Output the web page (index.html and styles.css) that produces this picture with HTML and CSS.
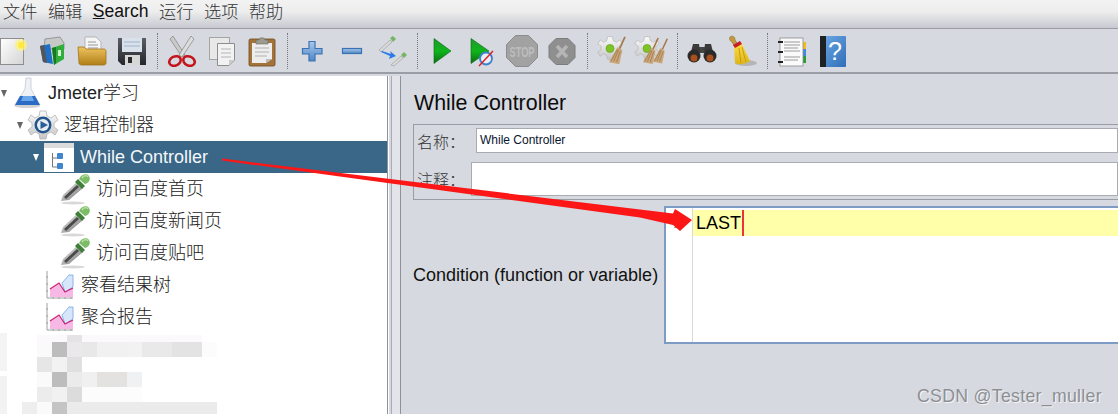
FILE: index.html
```html
<!DOCTYPE html>
<html lang="en">
<head>
  <meta charset="UTF-8">
  <title>While Controller</title>
  <link rel="stylesheet" href="styles.css">
</head>
<body>
  <!-- Shared gradients and repeated icons -->
  <svg class="defs" width="0" height="0" aria-hidden="true">
    <defs>
      <linearGradient id="gPage" x1="0" y1="0" x2="1" y2="1"><stop offset="0" stop-color="#fff"/><stop offset="1" stop-color="#d4d4d4"/></linearGradient>
      <linearGradient id="gFolder" x1="0" y1="0" x2="0" y2="1"><stop offset="0" stop-color="#eec35f"/><stop offset="1" stop-color="#b27f17"/></linearGradient>
      <linearGradient id="gDisk" x1="0" y1="0" x2="0" y2="1"><stop offset="0" stop-color="#5a5f66"/><stop offset="1" stop-color="#24272b"/></linearGradient>
      <linearGradient id="gPlay" x1="0" y1="0" x2="0" y2="1"><stop offset="0" stop-color="#1f9a2a"/><stop offset="0.5" stop-color="#0fb51c"/><stop offset="1" stop-color="#0a6d14"/></linearGradient>
      <linearGradient id="gBlue" x1="0" y1="0" x2="0" y2="1"><stop offset="0" stop-color="#a9c8ec"/><stop offset="1" stop-color="#4f87c6"/></linearGradient>
      <linearGradient id="gGear" x1="0" y1="0" x2="0" y2="1"><stop offset="0" stop-color="#fafafa"/><stop offset="1" stop-color="#c6c6c6"/></linearGradient>
      <linearGradient id="gBroom" x1="0" y1="0" x2="0" y2="1"><stop offset="0" stop-color="#ffe04a"/><stop offset="1" stop-color="#dcb417"/></linearGradient>
      <linearGradient id="gBook" x1="0" y1="0" x2="1" y2="1"><stop offset="0" stop-color="#6fa9e6"/><stop offset="1" stop-color="#2f6fb8"/></linearGradient>
      <linearGradient id="gGlass" x1="0" y1="0" x2="1" y2="1"><stop offset="0" stop-color="#f2f2f2"/><stop offset="1" stop-color="#6c6c6c"/></linearGradient>

      <symbol id="dropper" viewBox="0 0 32 32">
        <ellipse cx="13" cy="30" rx="12" ry="1.400" fill="#c8c8c8" opacity=".7"/>
        <path d="M1 28 L3 22 L17 9 L23 15 L9 27 Z" fill="url(#gGlass)"/>
        <path d="M4 24 L17 12 L19 14 L6 26 Z" fill="#4a4a4a"/>
        <path d="M15 9 L18 6 L25 13 L22 16 Z" fill="#3f7f3a"/>
        <path d="M19 6 C21 1 27 0 29 3 C31 6 29 10 25 11 Z" fill="#7cbb68"/>
        <path d="M22 5 C24 2 27 2 28 4" fill="none" stroke="#bce0a8" stroke-width="1.400"/>
      </symbol>

      <symbol id="chart" viewBox="0 0 28 32">
        <path d="M1 2 V29 H27" fill="none" stroke="#a0a0a0" stroke-width="1"/>
        <path d="M0 8 H2 M0 15 H2 M0 22 H2 M7 28 V30 M13 28 V30 M19 28 V30 M25 28 V30" stroke="#a0a0a0"/>
        <path d="M16 14 L23 6 H27 V18 L19 23 Z" fill="#d7e6fb" stroke="#8ab4ea" stroke-width="1"/>
        <path d="M4 20 L13 14 L19 23 L27 19 V28 H4 Z" fill="#f7b8e5"/>
        <path d="M4 20 L13 14 L19 23 L27 19" fill="none" stroke="#c8246f" stroke-width="1.200"/>
      </symbol>

      <symbol id="gearwheel" viewBox="0 0 32 32">
        <path d="M13 2 H19 L20 7 L24 9 L28 6 L31 11 L27 14 V18 L31 21 L28 26 L24 23 L20 25 L19 30 H13 L12 25 L8 23 L4 26 L1 21 L5 18 V14 L1 11 L4 6 L8 9 L12 7 Z" fill="url(#gGear)" stroke="#b4b4b4" stroke-width=".8"/>
      </symbol>

      <symbol id="broomstick" viewBox="0 0 20 32">
        <path d="M18 1 L12 14" stroke="#a5784a" stroke-width="1.800"/>
        <path d="M10 12 L15 15 L12 30 L1 28 Z" fill="#cba678"/>
        <path d="M6 27 L11 15 M9 28 L13 16 M3 27 L10 14" stroke="#98754c" stroke-width=".8"/>
      </symbol>
    </defs>
  </svg>

  <div class="menu-bar">
    <span class="menu-item">文件</span>
    <span class="menu-item">编辑</span>
    <span class="menu-item menu-latin"><u>S</u>earch</span>
    <span class="menu-item">运行</span>
    <span class="menu-item">选项</span>
    <span class="menu-item">帮助</span>
  </div>

  <div class="toolbar">
    <!-- new -->
    <span class="tool"><svg viewBox="0 0 32 32"><rect x="4.500" y="3.500" width="23" height="26" fill="url(#gPage)" stroke="#8e8e8e"/><circle cx="25" cy="10" r="6" fill="#fff27a" opacity=".75"/><circle cx="25" cy="10" r="3" fill="#ffe93a"/></svg></span>
    <!-- templates -->
    <span class="tool"><svg viewBox="0 0 32 32"><path d="M9 4 L24 2 L28 8 V14 L8 14 Z" fill="#c6c9c6" stroke="#888" stroke-width=".8"/><path d="M4 11 L14 9 L17 29 L7 27 Z" fill="#1f6fc4"/><path d="M4 11 L8 10 L11 28 L7 27 Z" fill="#555"/><path d="M16 13 L28 9 V24 L18 30 Z" fill="#2fae3a"/><path d="M16 13 L20 12 V28 L18 30 Z" fill="#177a22"/><rect x="22" y="15" width="3" height="6" fill="#d5f2d5"/></svg></span>
    <!-- open -->
    <span class="tool"><svg viewBox="0 0 32 32"><path d="M9 2 H20 L25 7 V18 H9 Z" fill="#f5f5f5" stroke="#aaa" stroke-width=".8"/><path d="M12 7 H20 M12 10 H22 M12 13 H22" stroke="#999"/><path d="M2 12 H8 L10 14 H28 C29 14 30 15 30 16 V28 C30 29 29 30 28 30 H6 C4 30 3 29 3 28 Z" fill="url(#gFolder)" stroke="#a27519" stroke-width=".8"/></svg></span>
    <!-- save -->
    <span class="tool"><svg viewBox="0 0 32 32"><path d="M2 3 H30 V30 H6 L2 26 Z" fill="url(#gDisk)"/><rect x="6" y="3" width="20" height="14" fill="#d9e1ea"/><path d="M8 7 H24 M8 11 H24" stroke="#9fb5cf"/><rect x="9" y="20" width="15" height="10" fill="#d7d7d7"/><rect x="12" y="22" width="4" height="6" fill="#2b2b2b"/></svg></span>
    <span class="tool-sep"></span>
    <!-- cut -->
    <span class="tool"><svg viewBox="0 0 32 32"><path d="M7 1 L19 20 L16 22 L4 4 Z" fill="#c9c9c9" stroke="#8d8d8d" stroke-width=".8"/><path d="M25 1 L13 20 L16 22 L28 4 Z" fill="#dcdcdc" stroke="#8d8d8d" stroke-width=".8"/><ellipse cx="9" cy="26" rx="6" ry="4.500" fill="none" stroke="#c4141c" stroke-width="2.600" transform="rotate(-25 9 26)"/><ellipse cx="23" cy="26" rx="6" ry="4.500" fill="none" stroke="#c4141c" stroke-width="2.600" transform="rotate(25 23 26)"/></svg></span>
    <!-- copy -->
    <span class="tool"><svg viewBox="0 0 32 32"><rect x="3.500" y="2.500" width="20" height="22" fill="#e8e8e8" stroke="#a4a4a4"/><path d="M11.500 8.500 H28.500 V25 L23 30.500 H11.500 Z" fill="#f2f2f2" stroke="#8d8d8d"/><path d="M15 14 H25 M15 18 H25 M15 22 H25" stroke="#b5b5b5"/><path d="M23 30 V25 H28 Z" fill="#ccc"/></svg></span>
    <!-- paste -->
    <span class="tool"><svg viewBox="0 0 32 32"><rect x="3" y="4" width="26" height="27" rx="1.500" fill="#a4733a" stroke="#6f4a20" stroke-width=".8"/><path d="M6 8 H26 V24 L20 28 H6 Z" fill="#ededed"/><path d="M9 13 H23 M9 17 H23 M9 21 H21" stroke="#b0b0b0"/><path d="M20 28 V24 H26 Z" fill="#bbb"/><path d="M10 9 V5 H13 C13 2 19 2 19 5 H22 V9 Z" fill="#9b9b8f" stroke="#6d6d66" stroke-width=".6"/></svg></span>
    <span class="tool-sep"></span>
    <!-- add -->
    <span class="tool"><svg viewBox="0 0 32 32"><path d="M13 6.500 H19 V13.500 H26 V19 H19 V26 H13 V19 H6.500 V13.500 H13 Z" fill="url(#gBlue)" stroke="#3b72b4" stroke-width="1.200"/></svg></span>
    <!-- remove -->
    <span class="tool"><svg viewBox="0 0 32 32"><rect x="6.500" y="13.500" width="19" height="5" fill="url(#gBlue)" stroke="#3b72b4" stroke-width="1.200"/></svg></span>
    <!-- start/stop toggle -->
    <span class="tool"><svg viewBox="0 0 32 32"><path d="M3 15 L14 5 L16 7 L5 17 Z" fill="#d8d8d8" stroke="#9a9a9a" stroke-width=".6"/><path d="M14 3 L17 1 L20 4 L17 7 Z" fill="#77b565"/><path d="M6 16 L15 19 L14 16 L20 21 L13 24 L14 21 L5 17 Z" fill="#2a7be8"/><path d="M15 30 L25 21 L27 23 L18 31 Z" fill="#d8d8d8" stroke="#9a9a9a" stroke-width=".6"/><path d="M25 20 L28 17 L31 20 L28 23 Z" fill="#77b565"/></svg></span>
    <span class="tool-sep"></span>
    <!-- run -->
    <span class="tool"><svg viewBox="0 0 32 32"><path d="M8 3.500 L25 16 L8 28.500 Z" fill="url(#gPlay)" stroke="#0c6a16" stroke-width=".6"/></svg></span>
    <!-- run no pauses -->
    <span class="tool"><svg viewBox="0 0 32 32"><path d="M5 3.500 L23 16 L5 28.500 Z" fill="url(#gPlay)" stroke="#0c6a16" stroke-width=".6"/><circle cx="20" cy="23.500" r="6" fill="#e8eef7" stroke="#3f80cc" stroke-width="1.800"/><path d="M13 31 L27 16" stroke="#e01b24" stroke-width="1.400"/></svg></span>
    <!-- stop -->
    <span class="tool"><svg viewBox="0 0 32 32"><path d="M9.500 0.500 H22.500 L31.500 9.500 V22.500 L22.500 31.500 H9.500 L0.500 22.500 V9.500 Z" fill="#a2a2a2" stroke="#8c8c8c"/><text class="stop-text" x="16" y="21.500" text-anchor="middle" textLength="25" lengthAdjust="spacingAndGlyphs">STOP</text></svg></span>
    <!-- shutdown -->
    <span class="tool"><svg viewBox="0 0 32 32"><path d="M10 3.500 H22 L29 10.500 V22.500 L22 29.500 H10 L3 22.500 V10.500 Z" fill="#8f8f8f" stroke="#7c7c7c"/><path d="M11 11 L21 22 M21 11 L11 22" stroke="#b5b5b5" stroke-width="3.500"/></svg></span>
    <span class="tool-sep"></span>
    <!-- clear -->
    <span class="tool"><svg viewBox="0 0 32 32"><use href="#gearwheel" x="1" y="0" width="26" height="26"/><circle cx="14" cy="13.500" r="4" fill="#7fc425" stroke="#5d9a18" stroke-width=".6"/><use href="#broomstick" x="12" y="1" width="19" height="30"/></svg></span>
    <!-- clear all -->
    <span class="tool"><svg viewBox="0 0 32 32"><use href="#gearwheel" x="-2" y="0" width="26" height="26"/><circle cx="11" cy="13.500" r="4" fill="#7fc425" stroke="#5d9a18" stroke-width=".6"/><use href="#broomstick" x="6" y="2" width="18" height="29"/><use href="#broomstick" x="16" y="2" width="17" height="29"/></svg></span>
    <span class="tool-sep"></span>
    <!-- search -->
    <span class="tool"><svg viewBox="0 0 32 32"><rect x="11" y="12" width="10" height="6" fill="#444"/><path d="M7 9 H13 L14 17 H5 Z M19 9 H25 L27 17 H18 Z" fill="#3a3a3a"/><circle cx="8" cy="21" r="6.500" fill="#2a2a2a"/><circle cx="24" cy="21" r="6.500" fill="#2a2a2a"/><circle cx="8" cy="23" r="3.500" fill="#a94f1c"/><circle cx="24" cy="23" r="3.500" fill="#a94f1c"/></svg></span>
    <!-- reset search -->
    <span class="tool"><svg viewBox="0 0 32 32"><ellipse cx="20" cy="28" rx="11" ry="3" fill="#b5b5b5"/><path d="M4 2 C7 0 9 2 9 5 L12 10 L9 12 L6 7 C4 6 3 4 4 2 Z" fill="#c39a3e" stroke="#8a6a1e" stroke-width=".6"/><path d="M8 11 L15 7 L24 26 C18 30 11 30 9 28 Z" fill="url(#gBroom)"/><path d="M13 13 L15 28 M16 12 L20 27" stroke="#c79d0f"/><path d="M7 10 L14 6 L16 9 L9 13 Z" fill="#c61f28"/></svg></span>
    <span class="tool-sep"></span>
    <!-- function helper -->
    <span class="tool"><svg viewBox="0 0 32 32"><rect x="26" y="7" width="4" height="7" fill="#f2bd1c"/><rect x="26" y="14" width="4" height="7" fill="#3e8ae0"/><rect x="26" y="21" width="4" height="7" fill="#2d9c35"/><rect x="4" y="3" width="23" height="28" fill="#fafafa" stroke="#8c8c8c" stroke-width=".8"/><path d="M8 7 H24 M8 10 H24 M8 13 H22 M8 16 H24 M8 22 H24 M8 25 H22" stroke="#9a9a9a"/><path d="M2 7 H7 M2 17 H7 M2 27 H7" stroke="#222" stroke-width="2.200"/></svg></span>
    <!-- help -->
    <span class="tool"><svg viewBox="0 0 32 32"><rect x="5" y="1" width="25" height="31" rx="1" fill="url(#gBook)"/><rect x="4" y="1" width="6" height="31" fill="#1f2225"/><text class="help-text" x="19" y="25" text-anchor="middle">?</text></svg></span>
  </div>

  <div class="split">
    <div class="tree">
      <div class="row l0"><i class="twist"></i>
        <svg class="node" viewBox="0 0 32 32"><ellipse cx="16" cy="29" rx="13" ry="2" fill="#d4d4d4"/><path d="M15 1 H20 V12 L29 28 H4 L14 12 Z" fill="#eef2f6" stroke="#c2c8cf" stroke-width=".8"/><path d="M9 19 H24 L29 28 H4 Z" fill="#2a6cc4"/><path d="M12 19 H21 L23 24 H10 Z" fill="#69a6ea"/></svg>
        <span class="label">Jmeter<span class="cjk">学习</span></span></div>
      <div class="row l1"><i class="twist"></i>
        <svg class="node" viewBox="0 0 32 32"><use href="#gearwheel" x="0" y="0" width="32" height="32"/><circle cx="16" cy="16" r="8.500" fill="#23548c"/><circle cx="16" cy="16" r="6" fill="#e8edf2"/><path d="M13.500 12 L21 16 L13.500 20 Z" fill="#2b5e98"/></svg>
        <span class="label cjk">逻辑控制器</span></div>
      <div class="row l2 selected"><i class="twist"></i>
        <svg class="node" viewBox="0 0 32 32"><rect x="1" y="2" width="30" height="29" fill="#fff"/><rect x="1" y="2" width="30" height="5" fill="#dcdcdc"/><path d="M9.500 12 V26 H15 M9.500 17 H15" fill="none" stroke="#777"/><rect x="14" y="12" width="6" height="6" rx="1" fill="#3e86cf"/><rect x="14" y="22" width="6" height="6" rx="1" fill="#3e86cf"/></svg>
        <span class="label">While Controller</span></div>
      <div class="row l3"><svg class="node no-twist" viewBox="0 0 32 32"><use href="#dropper" width="32" height="32"/></svg><span class="label cjk">访问百度首页</span></div>
      <div class="row l3"><svg class="node no-twist" viewBox="0 0 32 32"><use href="#dropper" width="32" height="32"/></svg><span class="label cjk">访问百度新闻页</span></div>
      <div class="row l3"><svg class="node no-twist" viewBox="0 0 32 32"><use href="#dropper" width="32" height="32"/></svg><span class="label cjk">访问百度贴吧</span></div>
      <div class="row l2"><svg class="node no-twist chart" viewBox="0 0 28 32"><use href="#chart" width="28" height="32"/></svg><span class="label cjk">察看结果树</span></div>
      <div class="row l2"><svg class="node no-twist chart" viewBox="0 0 28 32"><use href="#chart" width="28" height="32"/></svg><span class="label cjk">聚合报告</span></div>
      <!-- pixelated part of the tree -->
      <svg class="mosaic" width="388" height="82" viewBox="0 0 388 82" shape-rendering="crispEdges">
        <rect x="0" y="1" width="7" height="38" fill="#f4f4f4"/><rect x="0" y="44" width="7" height="38" fill="#f2f2f2"/>
        <rect x="37" y="3" width="165" height="7" fill="#fbf9fb"/><rect x="67" y="3" width="15" height="7" fill="#e6e3e6"/>
        <rect x="37" y="10" width="15" height="15" fill="#fafafa"/><rect x="52" y="10" width="15" height="15" fill="#bdbdbd"/><rect x="67" y="10" width="15" height="15" fill="#ebe8eb"/><rect x="82" y="10" width="15" height="15" fill="#e8e8e8"/><rect x="97" y="10" width="30" height="15" fill="#f1f1f1"/><rect x="127" y="10" width="15" height="15" fill="#f2f2f2"/><rect x="142" y="10" width="30" height="15" fill="#e9e9e9"/><rect x="172" y="10" width="30" height="15" fill="#e3e3e3"/><rect x="202" y="10" width="15" height="15" fill="#fbfcfb"/>
        <rect x="37" y="25" width="15" height="15" fill="#e6e6e6"/><rect x="52" y="25" width="15" height="15" fill="#f2f2f2"/><rect x="67" y="25" width="15" height="15" fill="#e0e0e0"/>
        <rect x="37" y="40" width="15" height="15" fill="#fafafa"/><rect x="52" y="40" width="15" height="15" fill="#bdbdbd"/><rect x="67" y="40" width="15" height="15" fill="#ebebeb"/><rect x="82" y="40" width="15" height="15" fill="#f0f0f0"/><rect x="97" y="40" width="30" height="15" fill="#e3e2e0"/><rect x="127" y="40" width="15" height="15" fill="#f0f1f2"/>
        <rect x="37" y="55" width="15" height="15" fill="#ececec"/><rect x="52" y="55" width="15" height="15" fill="#f1f1f1"/><rect x="67" y="55" width="15" height="15" fill="#dcdcdc"/><rect x="82" y="55" width="60" height="15" fill="#fcfcfc"/>
        <rect x="22" y="70" width="15" height="12" fill="#eeeeee"/><rect x="37" y="70" width="15" height="12" fill="#fafafa"/><rect x="52" y="70" width="15" height="12" fill="#c4c4c4"/><rect x="67" y="70" width="150" height="12" fill="#ebebeb"/>
      </svg>
    </div>

    <div class="divider"></div>

    <div class="panel">
      <h1 class="panel-title">While Controller</h1>
      <div class="name-box">
        <div class="field field-name"><span class="field-label cjk">名称：</span><div class="field-input">While Controller</div></div>
        <div class="field field-note"><span class="field-label cjk">注释：</span><div class="field-input"></div></div>
      </div>
      <div class="condition">
        <span class="condition-label">Condition (function or variable)</span>
        <div class="editor">
          <div class="gutter">1</div>
          <div class="code">
            <div class="code-line">LAST<span class="caret"></span></div>
          </div>
        </div>
      </div>
    </div>
  </div>

  <!-- annotation on top of the screenshot -->
  <svg class="red-arrow" width="1118" height="414" viewBox="0 0 1118 414">
    <path d="M222 158.500 L673 213.500 L675 209 L692 220 L680 231 L673 225 L640 217.500 L222 160.500 Z" fill="#fc1616"/>
  </svg>
  <div class="watermark">CSDN @Tester_muller</div>
</body>
</html>
```

FILE: styles.css
```css
/* General */
html, body {
  height: 100%;
}

body {
  margin: 0;
  display: flex;
  flex-direction: column;
  height: 100vh;
  overflow: hidden;
  position: relative;
  background-color: #d6d9e0;
  font-family: "Liberation Sans", Arial, sans-serif;
  color: #111;
}

.cjk {
  font-family: "Noto Sans CJK SC", "Liberation Sans", sans-serif;
  font-weight: 300;
}

.defs {
  position: absolute;
}

/* Menu */
.menu-bar {
  height: 28px;
  flex: none;
  display: flex;
  align-items: flex-start;
  gap: 10.500px;
  padding-left: 3px;
  background: linear-gradient(#f2f2f2 0, #eeeeee 40%, #c6c9d0 100%);
  border-bottom: 1px solid #9a9da6;
  font-family: "Noto Sans CJK SC", "Liberation Sans", sans-serif;
  font-weight: 300;
  font-size: 17.200px;
  line-height: 22px;
  color: #333;
}

.menu-latin {
  font-family: "Liberation Sans", Arial, sans-serif;
  font-weight: 400;
  font-size: 17.600px;
  color: #111;
}

/* Toolbar */
.toolbar {
  height: 43px;
  flex: none;
  display: flex;
  align-items: center;
  margin-left: -8px;
  border-bottom: 2px solid #9a9da6;
}

.tool {
  width: 40px;
  height: 34px;
  display: flex;
  align-items: center;
  justify-content: center;
}

.tool svg {
  width: 32px;
  height: 32px;
  overflow: visible;
}

.tool-sep {
  width: 10px;
  height: 36px;
  box-sizing: border-box;
  border-left: 1px dotted #777;
  margin-left: 5px;
  margin-right: -5px;
}

.stop-text {
  font-family: "Liberation Sans", Arial, sans-serif;
  font-weight: 700;
  font-size: 15px;
  fill: #bdbdbd;
}

.help-text {
  font-family: "Liberation Sans", Arial, sans-serif;
  font-size: 25px;
  fill: #fff;
}

/* Split */
.split {
  flex: 1;
  display: flex;
  min-height: 0;
  padding-top: 2px;
}

.tree {
  width: 387px;
  flex: none;
  background-color: #fff;
  border-right: 1px solid #8f929b;
  padding-top: 1px;
  overflow: hidden;
}

.divider {
  width: 13px;
  flex: none;
  box-sizing: border-box;
  border-left: 1px solid #fff;
  border-right: 1px solid #8f929b;
  background: linear-gradient(to right, #d6d9e0 0, #d6d9e0 2px, #a9acb4 2px, #a9acb4 3px, #e2e4e9 3px);
}

/* Tree rows */
.row {
  height: 32px;
  display: flex;
  align-items: center;
  font-size: 18px;
  color: #222;
}

.l0 { padding-left: 0; }
.l1 { padding-left: 16px; }
.l2 { padding-left: 32px; }
.l3 { padding-left: 48px; }

.twist {
  width: 0;
  height: 0;
  margin-left: 1px;
  margin-right: 8px;
  border-left: 3.500px solid transparent;
  border-right: 3.500px solid transparent;
  border-top: 7px solid #666;
}

.node {
  width: 32px;
  height: 32px;
  margin-left: -4px;
  margin-right: 5px;
  flex: none;
}

.no-twist {
  margin-left: 12px;
  margin-right: 4px;
}

.chart {
  width: 28px;
  margin-left: 14px;
  margin-right: 7px;
}

.label {
  padding-bottom: 5px;
}

.selected {
  background-color: #3a6787;
  color: #f4f7fa;
}

.selected .twist {
  border-top-color: #fff;
}

.selected .label {
  padding-bottom: 0;
}

.mosaic {
  display: block;
  margin-top: -1px;
}

/* Right panel */
.panel {
  flex: 1;
  min-width: 0;
  padding: 13px 0 0 12px;
  overflow: hidden;
}

.panel-title {
  margin: 0 0 7px 1px;
  font-size: 21.400px;
  font-weight: 400;
  line-height: 28px;
  color: #0c0c0c;
}

.name-box {
  height: 76px;
  box-sizing: border-box;
  border: 1px solid #9a9da6;
  border-right: none;
  padding-top: 3px;
  display: flex;
  flex-direction: column;
  gap: 9px;
}

.field {
  display: flex;
  align-items: center;
}

.field-label {
  font-size: 16px;
  padding-left: 3px;
  color: #333;
  white-space: nowrap;
}

.field-name {
  height: 25px;
}

.field-name .field-label {
  width: 59px;
}

.field-note {
  height: 34px;
}

.field-note .field-label {
  width: 54px;
}

.field-input {
  flex: 1;
  height: 100%;
  box-sizing: border-box;
  background-color: #fff;
  border: 1px solid #a8abb2;
  padding-left: 3px;
  font-size: 12px;
  line-height: 23px;
  color: #0a1530;
}

.condition {
  display: flex;
  align-items: center;
  margin-top: 6px;
}

.condition-label {
  width: 251px;
  flex: none;
  font-size: 18px;
  white-space: nowrap;
}

.editor {
  flex: 1;
  height: 138px;
  box-sizing: border-box;
  border: 2px solid #7c9cc6;
  border-right: none;
  background-color: #fff;
  display: flex;
}

.gutter {
  width: 27px;
  flex: none;
  border-right: 1px solid #d9d9d9;
  padding-top: 9px;
  padding-right: 12px;
  box-sizing: border-box;
  text-align: right;
  font-size: 12px;
  color: #888;
}

.code {
  flex: 1;
  padding-top: 2px;
}

.code-line {
  height: 26px;
  padding-left: 3px;
  background-color: #ffffaa;
  font-size: 18px;
  line-height: 26px;
  color: #000;
  display: flex;
}

.caret {
  width: 2px;
  margin-left: 1px;
  background-color: #e8343a;
}

/* Overlays */
.red-arrow {
  position: absolute;
  left: 0;
  top: 0;
}

.watermark {
  position: absolute;
  left: 917px;
  top: 386px;
  font-size: 17.700px;
  letter-spacing: .3px;
  color: #8d8f94;
  text-shadow: 1px 1px 0 #f4f4f4;
}
```
